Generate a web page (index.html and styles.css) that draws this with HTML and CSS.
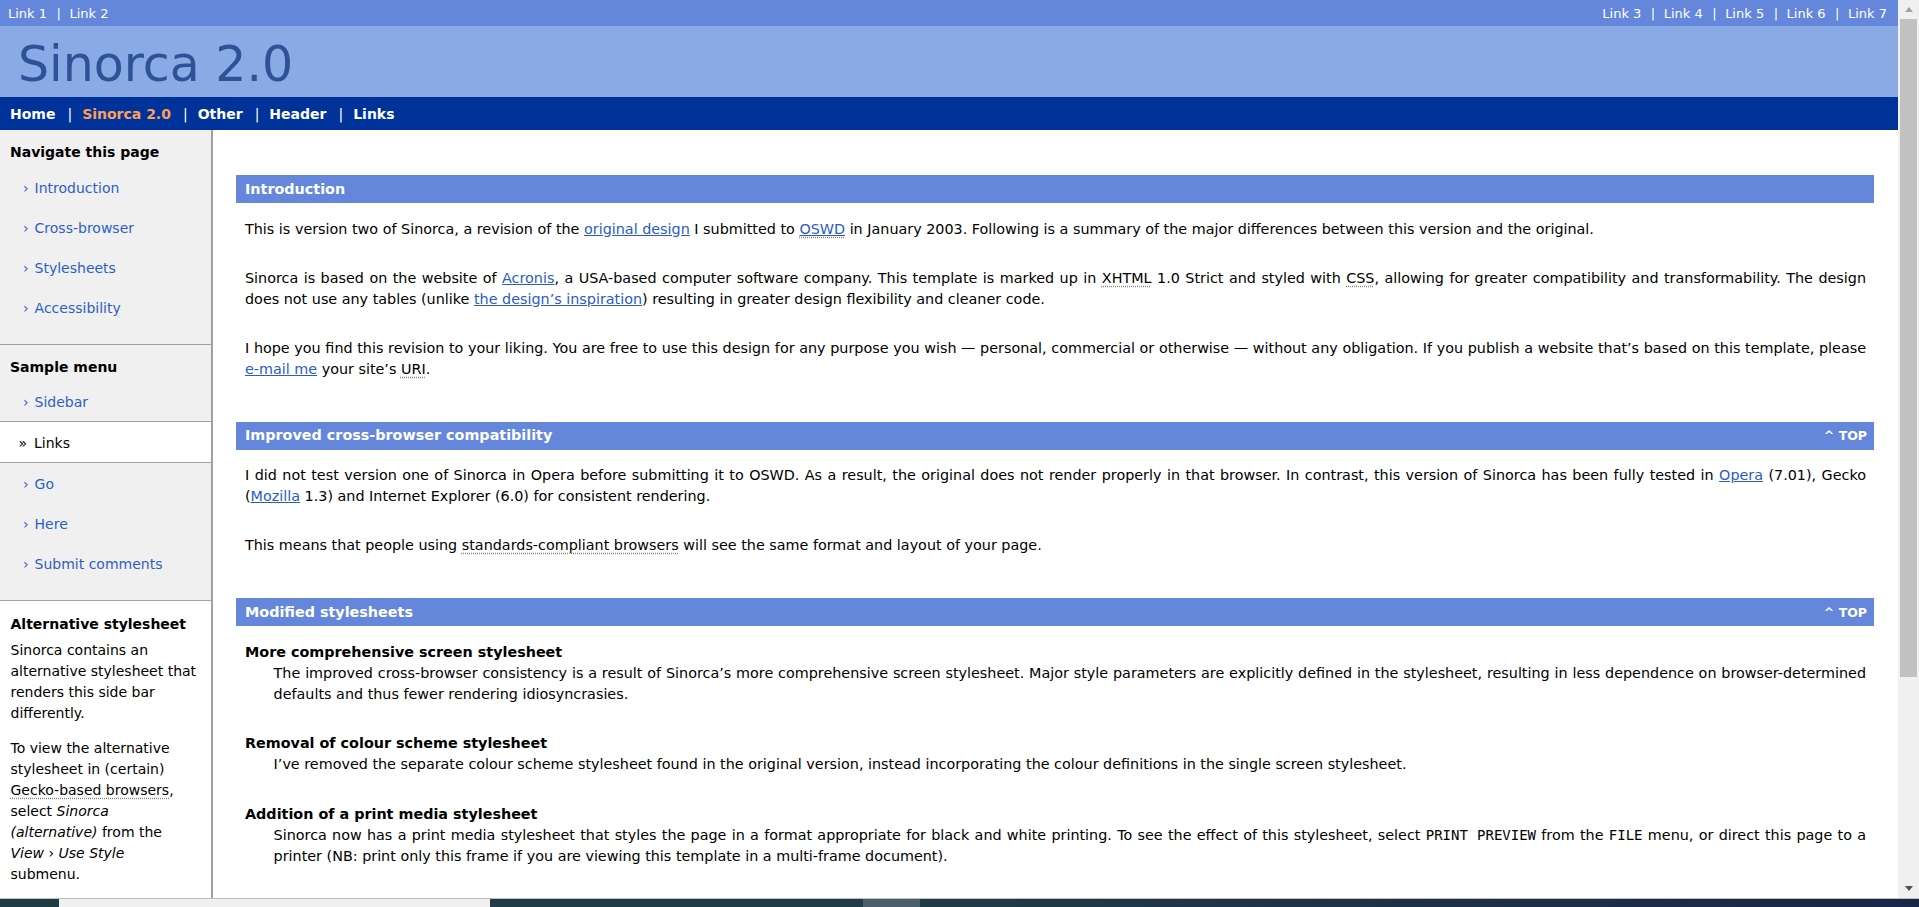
FILE: index.html
```html
<!DOCTYPE html>
<html lang="en">
<head>
<meta charset="utf-8">
<title>Sinorca 2.0</title>
<link rel="stylesheet" href="styles.css">
</head>
<body>
<div class="screen">
  <div class="viewport">
    <div class="page">
      <div class="super-header">
        <div class="top-links">
          <a class="top-link" href="#">Link 1</a><span class="sep">|</span><a class="top-link" href="#">Link 2</a>
        </div>
        <div class="top-links">
          <a class="top-link" href="#">Link 3</a><span class="sep">|</span><a class="top-link" href="#">Link 4</a><span class="sep">|</span><a class="top-link" href="#">Link 5</a><span class="sep">|</span><a class="top-link" href="#">Link 6</a><span class="sep">|</span><a class="top-link" href="#">Link 7</a>
        </div>
      </div>
      <div class="mid-header">
        <h1 class="header-title">Sinorca 2.0</h1>
      </div>
      <div class="sub-header">
        <a class="nav-link" href="#">Home</a><span class="nav-sep">|</span><a class="nav-link highlight" href="#">Sinorca 2.0</a><span class="nav-sep">|</span><a class="nav-link" href="#">Other</a><span class="nav-sep">|</span><a class="nav-link" href="#">Header</a><span class="nav-sep">|</span><a class="nav-link" href="#">Links</a>
      </div>

      <div class="body-row">
        <aside class="side-bar">
          <div class="side-sec">
            <h2 class="side-title">Navigate this page</h2>
            <ul class="side-list">
              <li><a class="side-link" href="#intro"><span class="bullet">›</span> Introduction</a></li>
              <li><a class="side-link" href="#cross-browser"><span class="bullet">›</span> Cross-browser</a></li>
              <li><a class="side-link" href="#stylesheets"><span class="bullet">›</span> Stylesheets</a></li>
              <li><a class="side-link" href="#accessibility"><span class="bullet">›</span> Accessibility</a></li>
            </ul>
          </div>
          <div class="side-sec">
            <h2 class="side-title">Sample menu</h2>
            <ul class="side-list">
              <li><a class="side-link" href="#"><span class="bullet">›</span> Sidebar</a></li>
              <li class="side-current"><span class="bullet-here">»</span> Links</li>
              <li><a class="side-link" href="#"><span class="bullet">›</span> Go</a></li>
              <li><a class="side-link" href="#"><span class="bullet">›</span> Here</a></li>
              <li><a class="side-link" href="#"><span class="bullet">›</span> Submit comments</a></li>
            </ul>
          </div>
          <div class="side-sec side-note">
            <h2 class="side-title note-title">Alternative stylesheet</h2>
            <p class="side-text">Sinorca contains an alternative stylesheet that renders this side bar differently.</p>
            <p class="side-text">To view the alternative stylesheet in (certain) <abbr class="abbr" title="Mozilla, Netscape 6+, etc.">Gecko-based browsers</abbr>, select <em>Sinorca (alternative)</em> from the <em>View</em> › <em>Use Style</em> submenu.</p>
          </div>
        </aside>

        <main class="main-copy">
          <h1 class="sec-title" id="intro"><span>Introduction</span></h1>
          <p class="copy">This is version two of Sinorca, a revision of the <a class="link" href="#">original design</a> I submitted to <a class="link" href="#"><abbr class="abbr" title="Open Source Web Design">OSWD</abbr></a> in January 2003. Following is a summary of the major differences between this version and the original.</p>
          <p class="copy">Sinorca is based on the website of <a class="link" href="#">Acronis</a>, a USA-based computer software company. This template is marked up in <abbr class="abbr" title="eXtensible HyperText Markup Language">XHTML</abbr> 1.0 Strict and styled with <abbr class="abbr" title="Cascading Style Sheets">CSS</abbr>, allowing for greater compatibility and transformability. The design does not use any tables (unlike <a class="link" href="#">the design’s inspiration</a>) resulting in greater design flexibility and cleaner code.</p>
          <p class="copy">I hope you find this revision to your liking. You are free to use this design for any purpose you wish — personal, commercial or otherwise — without any obligation. If you publish a website that’s based on this template, please <a class="link" href="#">e-mail me</a> your site’s <abbr class="abbr" title="Uniform Resource Identifier">URI</abbr>.</p>

          <h1 class="sec-title" id="cross-browser"><span>Improved cross-browser compatibility</span><a class="top" href="#">^ TOP</a></h1>
          <p class="copy">I did not test version one of Sinorca in Opera before submitting it to OSWD. As a result, the original does not render properly in that browser. In contrast, this version of Sinorca has been fully tested in <a class="link" href="#">Opera</a> (7.01), Gecko (<a class="link" href="#">Mozilla</a> 1.3) and Internet Explorer (6.0) for consistent rendering.</p>
          <p class="copy">This means that people using <abbr class="abbr" title="Opera 7, Mozilla, IE 6">standards-compliant browsers</abbr> will see the same format and layout of your page.</p>

          <h1 class="sec-title" id="stylesheets"><span>Modified stylesheets</span><a class="top" href="#">^ TOP</a></h1>
          <dl class="defs">
            <dt class="def-term">More comprehensive screen stylesheet</dt>
            <dd class="def-desc">The improved cross-browser consistency is a result of Sinorca’s more comprehensive screen stylesheet. Major style parameters are explicitly defined in the stylesheet, resulting in less dependence on browser-determined defaults and thus fewer rendering idiosyncrasies.</dd>
            <dt class="def-term">Removal of colour scheme stylesheet</dt>
            <dd class="def-desc">I’ve removed the separate colour scheme stylesheet found in the original version, instead incorporating the colour definitions in the single screen stylesheet.</dd>
            <dt class="def-term">Addition of a print media stylesheet</dt>
            <dd class="def-desc">Sinorca now has a print media stylesheet that styles the page in a format appropriate for black and white printing. To see the effect of this stylesheet, select <kbd class="key">PRINT PREVIEW</kbd> from the <kbd class="key">FILE</kbd> menu, or direct this page to a printer (NB: print only this frame if you are viewing this template in a multi-frame document).</dd>
          </dl>
        </main>
      </div>
    </div>

    <div class="scrollbar">
      <div class="sb-btn"><span class="arrow-up"></span></div>
      <div class="sb-thumb"></div>
      <div class="sb-track"></div>
      <div class="sb-btn sb-btn-down"><span class="arrow-down"></span></div>
    </div>
  </div>

  <div class="taskbar">
    <div class="tb-seg tb-a"></div>
    <div class="tb-seg tb-b"></div>
    <div class="tb-seg tb-c"></div>
    <div class="tb-seg tb-d"></div>
    <div class="tb-seg tb-e"></div>
  </div>
</div>
</body>
</html>
```

FILE: styles.css
```css
* { box-sizing: border-box; }

html, body {
  margin: 0;
  padding: 0;
}

body {
  font-family: "DejaVu Sans", Verdana, sans-serif;
  color: #000;
  background: #1e3842;
}

.screen {
  width: 1919px;
  height: 907px;
  display: flex;
  flex-direction: column;
  overflow: hidden;
}

.viewport {
  height: 899px;
  flex: none;
  display: flex;
  background: #fff;
  border-bottom: 1px solid #bdbdbd;
}

.page {
  flex: 1;
  min-width: 0;
  display: flex;
  flex-direction: column;
  overflow: hidden;
}

/* ---------- header ---------- */
.super-header {
  height: 26px;
  flex: none;
  background: #6487dc;
  color: #fff;
  display: flex;
  justify-content: space-between;
  align-items: center;
  padding: 1px 11px 0 8px;
  font-size: 13px;
}

.top-links {
  display: flex;
  align-items: center;
  white-space: nowrap;
}

.top-link {
  color: #fff;
  text-decoration: none;
}

.sep {
  margin: 0 8.5px 0 9.5px;
}

.mid-header {
  height: 71px;
  flex: none;
  background: #8aaae6;
  padding: 6px 0 0 18px;
}

.header-title {
  margin: 0;
  font-size: 49px;
  line-height: 65px;
  font-weight: normal;
  color: #2d5296;
  white-space: nowrap;
}

.sub-header {
  height: 33px;
  flex: none;
  background: #003399;
  color: #fff;
  font-size: 14px;
  line-height: 34px;
  font-weight: bold;
  padding-left: 10px;
  white-space: nowrap;
}

.nav-link {
  color: #fff;
  text-decoration: none;
}

.nav-link.highlight {
  color: #fd9f5b;
}

.nav-sep {
  font-weight: normal;
  margin: 0 10px 0 12px;
}

/* ---------- body ---------- */
.body-row {
  flex: 1;
  min-height: 0;
  display: flex;
  align-items: flex-start;
  overflow: hidden;
}

.side-bar {
  width: 213px;
  flex: none;
  background: #f0f0f0;
  border-right: 2px solid #a0a0a0;
  border-bottom: 1px solid #a0a0a0;
  font-size: 14px;
  line-height: 21px;
}

.side-sec {
  padding: 12px 0 17px;
  border-bottom: 1px solid #a0a0a0;
}

.side-title {
  margin: 0 0 3.5px;
  padding-left: 10px;
  font-size: 14px;
  line-height: 21px;
  font-weight: bold;
}

.side-list {
  list-style: none;
  margin: 0;
  padding: 0;
}

.side-link {
  display: block;
  padding: 11px 0 8px 23px;
  color: #2d60c6;
  text-decoration: none;
}

.bullet {
  margin-right: 1.5px;
}

.bullet-here {
  margin-right: 2.5px;
}

.side-current {
  background: #fff;
  border-top: 1px solid #a0a0a0;
  border-bottom: 1px solid #a0a0a0;
  padding: 11px 0 8px 18.5px;
  color: #000;
}

.side-sec.side-note {
  background: #fff;
  border-bottom: 0;
  padding: 13px 13.5px 13px 10.5px;
}

.note-title {
  padding-left: 0;
  margin-bottom: 5px;
}

.side-text {
  margin: 0 0 13.5px;
}

.side-text:last-child {
  margin-bottom: 0;
}

.abbr {
  text-decoration: underline dotted #888;
  text-underline-offset: 3px;
}

/* ---------- main copy ---------- */
.main-copy {
  flex: 1;
  min-width: 0;
  padding: 3px 24px 0 23px;
  font-size: 14.35px;
  line-height: 21px;
}

.sec-title {
  margin: 42px 0 0;
  padding: 3.5px 7px 3.5px 9px;
  background: #6487dc;
  color: #fff;
  font-size: 14.35px;
  line-height: 21px;
  font-weight: bold;
  display: flex;
  justify-content: space-between;
  align-items: baseline;
}

.top {
  color: #fff;
  text-decoration: none;
  font-size: 12.5px;
}

.copy {
  margin: 15.5px 8px 28px 9px;
  text-align: justify;
}

.link {
  color: #2a5cc6;
  text-decoration: underline;
}

.defs {
  margin: 15.5px 8px 0 9px;
}

.def-term {
  font-weight: bold;
}

.def-desc {
  margin: 0 0 28.6px 28.6px;
  text-align: justify;
}

.key {
  font-family: "DejaVu Sans Mono", monospace;
  font-size: 14px;
}

/* ---------- scrollbar ---------- */
.scrollbar {
  width: 21px;
  flex: none;
  background: #f0f0f0;
  display: flex;
  flex-direction: column;
  align-items: center;
}

.sb-btn {
  height: 19px;
  width: 100%;
  flex: none;
  display: flex;
  align-items: center;
  justify-content: center;
}

.arrow-up {
  width: 0;
  height: 0;
  border-left: 4.5px solid transparent;
  border-right: 4.5px solid transparent;
  border-bottom: 5px solid #a3a3a3;
}

.arrow-down {
  width: 0;
  height: 0;
  border-left: 4.5px solid transparent;
  border-right: 4.5px solid transparent;
  border-top: 5px solid #505050;
}

.sb-thumb {
  width: 17px;
  height: 658px;
  flex: none;
  background: #c1c1c1;
}

.sb-track {
  flex: 1;
}

/* ---------- taskbar ---------- */
.taskbar {
  flex: 1;
  display: flex;
}

.tb-seg { height: 100%; }
.tb-a { width: 59px; background: #1f3b44; }
.tb-b { width: 431px; background: #f0f0f0; }
.tb-c { width: 373px; background: #213c46; }
.tb-d { width: 57px; background: #4d6069; }
.tb-e { flex: 1; background: linear-gradient(90deg, #213b46, #1b2548); }
```
